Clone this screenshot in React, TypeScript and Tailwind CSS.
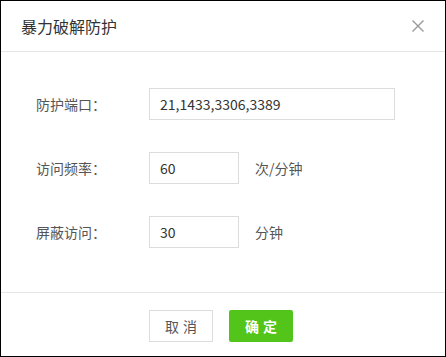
import React from "react";

const font = { fontFamily: '"Microsoft YaHei", "Noto Sans CJK SC", "Noto Sans", sans-serif' };

function Row({ label, value, wide, unit }: { label: string; value: string; wide?: boolean; unit?: string }) {
  return (
    <div className="flex items-center h-8">
      <span className="w-[113px] text-[14px] text-[#555]">{label}</span>
      <input
        defaultValue={value}
        className={`${wide ? "w-[246px]" : "w-[90px]"} h-8 border border-[#ddd] px-[10px] text-[14px] text-[#333] outline-none`}
      />
      {unit && <span className="ml-4 text-[14px] text-[#555]">{unit}</span>}
    </div>
  );
}

export default function App() {
  return (
    <div style={font} className="w-[446px] h-[357px] border border-black bg-white flex flex-col">
      <div className="h-[51px] flex items-center justify-between pl-5 pr-[20px] border-b border-[#e5e5e5] shrink-0">
        <span className="text-[16px] text-[#333]">暴力破解防护</span>
        <svg width="14" height="14" viewBox="0 0 14 14" className="text-[#999]">
          <path d="M1.5 1.5L12.5 12.5M12.5 1.5L1.5 12.5" stroke="currentColor" strokeWidth="1.4" fill="none" />
        </svg>
      </div>
      <div className="flex flex-col gap-8 pl-[35px] pt-9 h-[240px] shrink-0">
        <Row label="防护端口：" value="21,1433,3306,3389" wide />
        <Row label="访问频率：" value="60" unit="次/分钟" />
        <Row label="屏蔽访问：" value="30" unit="分钟" />
      </div>
      <div className="flex-1 border-t border-[#e5e5e5] flex justify-center gap-4 pt-[17px] pr-[4px]">
        <button className="w-16 h-8 border border-[#ddd] bg-white text-[14px] text-[#555] tracking-[4px] pl-[4px]">取消</button>
        <button className="w-16 h-8 rounded-[2px] bg-[#52c41a] text-[14px] font-bold text-white tracking-[4px] pl-[4px]">确定</button>
      </div>
    </div>
  );
}
